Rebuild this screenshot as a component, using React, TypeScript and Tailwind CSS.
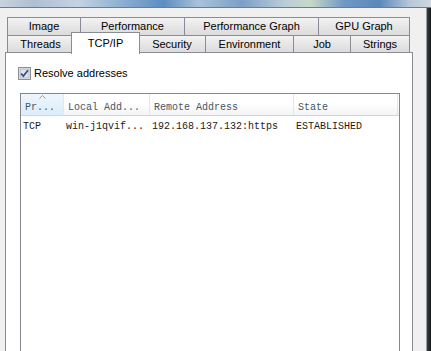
import React from "react";

const tabBase =
  "h-full flex items-center justify-center border-t border-l border-[#898c95] bg-[linear-gradient(#f3f3f3,#e6e6e6_50%,#dcdcdc)] text-[11px] text-black leading-none";

function Tab({ label, w, last }: { label: string; w: string; last?: boolean }) {
  return (
    <div className={`${tabBase} ${w} ${last ? "border-r" : ""}`}>
      <span>{label}</span>
    </div>
  );
}

function Checkbox() {
  return (
    <svg width="13" height="13" viewBox="0 0 13 13" className="shrink-0">
      <rect x="0.5" y="0.5" width="12" height="12" fill="#f6f6f6" stroke="#8e8f8f" />
      <rect x="2" y="2" width="9" height="9" fill="#dfe3ee" stroke="#b0b6c8" strokeWidth="1" />
      <path d="M3 6.5 L5.3 9 L10 3.2" fill="none" stroke="#3c4f86" strokeWidth="1.8" />
    </svg>
  );
}

export default function App() {
  return (
    <div
      className="w-[431px] h-[351px] overflow-hidden flex flex-col bg-[#f0f0f0]"
      style={{ fontFamily: '"Liberation Sans", Arial, sans-serif' }}
    >
      <div className="h-[7px] shrink-0 bg-[linear-gradient(90deg,#c9d3dd_0%,#aebfd2_8%,#c4d3e3_18%,#8fb0d2_28%,#5d8dbf_38%,#a9c2da_46%,#7c9fc6_56%,#b9ccd9_66%,#c8d8c8_72%,#6f97c3_80%,#5b88ba_88%,#b7c7d8_95%,#d0d8e0_100%)]" />
      <div className="flex flex-1 min-h-0 border-t border-[#6c7d91]">
        <div className="flex-1 flex flex-col pl-[5px] pt-[9px] min-h-0">
          <div className="ml-[2px] flex h-[18px] shrink-0">
            <Tab label="Image" w="w-[73px]" />
            <Tab label="Performance" w="w-[104px]" />
            <Tab label="Performance Graph" w="w-[134px]" />
            <Tab label="GPU Graph" w="w-[92px]" last />
          </div>
          <div className="ml-[2px] flex h-[17px] shrink-0 items-start">
            <Tab label="Threads" w="w-[66px]" />
            <div className="relative z-10 -mt-[3px] -mx-[2px] w-[69px] h-[22px] flex items-center justify-center border-t border-x border-[#898c95] bg-white text-[11px] leading-none text-black">
              <span className="pb-[1px]">TCP/IP</span>
            </div>
            <Tab label="Security" w="w-[67px]" />
            <Tab label="Environment" w="w-[88px]" />
            <Tab label="Job" w="w-[57px]" />
            <Tab label="Strings" w="w-[60px]" last />
          </div>
          <div className="w-[408px] flex-1 min-h-0 border-t border-x border-[#898c95] bg-white flex flex-col pl-[12px] pt-[14px]">
            <div className="flex items-center h-[13px] gap-[3px]">
              <Checkbox />
              <span className="text-[11px] leading-none text-black">Resolve addresses</span>
            </div>
            <div
              className="ml-[2px] mt-[13px] w-[380px] flex-1 border-t border-x border-[#828790] bg-white flex flex-col"
              style={{ fontFamily: '"Liberation Mono", "Courier New", monospace' }}
            >
              <div className="flex h-[22px] border-b border-[#d5d5d5] text-[10px] text-[#4a5566] bg-[linear-gradient(#ffffff,#ffffff_45%,#f3f4f6)]">
                <div className="relative w-[43px] h-full flex items-center pl-[4px] border-r border-[#e3e8ee] bg-[linear-gradient(#eef6fd,#dcecfa)]">
                  <svg width="7" height="4" viewBox="0 0 7 4" className="absolute left-[18px] top-[1px]">
                    <path d="M0.5 3.5 L3.5 0.5 L6.5 3.5" fill="none" stroke="#8e9db3" strokeWidth="1" />
                  </svg>
                  <span className="pt-[5px]">Pr...</span>
                </div>
                <div className="w-[86px] h-full flex items-center pl-[4px] border-r border-[#e5e5e5]">
                  <span className="pt-[5px]">Local Add...</span>
                </div>
                <div className="w-[144px] h-full flex items-center pl-[4px] border-r border-[#e5e5e5]">
                  <span className="pt-[5px]">Remote Address</span>
                </div>
                <div className="w-[104px] h-full flex items-center pl-[4px] border-r border-[#e5e5e5]">
                  <span className="pt-[5px]">State</span>
                </div>
              </div>
              <div className="flex h-[20px] items-center text-[10px] text-[#1a1a1a]">
                <div className="w-[43px] pl-[2px]">TCP</div>
                <div className="w-[86px] pl-[2px]">win-j1qvif...</div>
                <div className="w-[144px] pl-[2px]">192.168.137.132:https</div>
                <div className="w-[104px] pl-[2px]">ESTABLISHED</div>
              </div>
            </div>
          </div>
        </div>
        <div className="w-[5px] shrink-0 border-l border-[#9a9a9a] bg-[linear-gradient(90deg,#3a3f46,#15171a)]" />
      </div>
    </div>
  );
}
